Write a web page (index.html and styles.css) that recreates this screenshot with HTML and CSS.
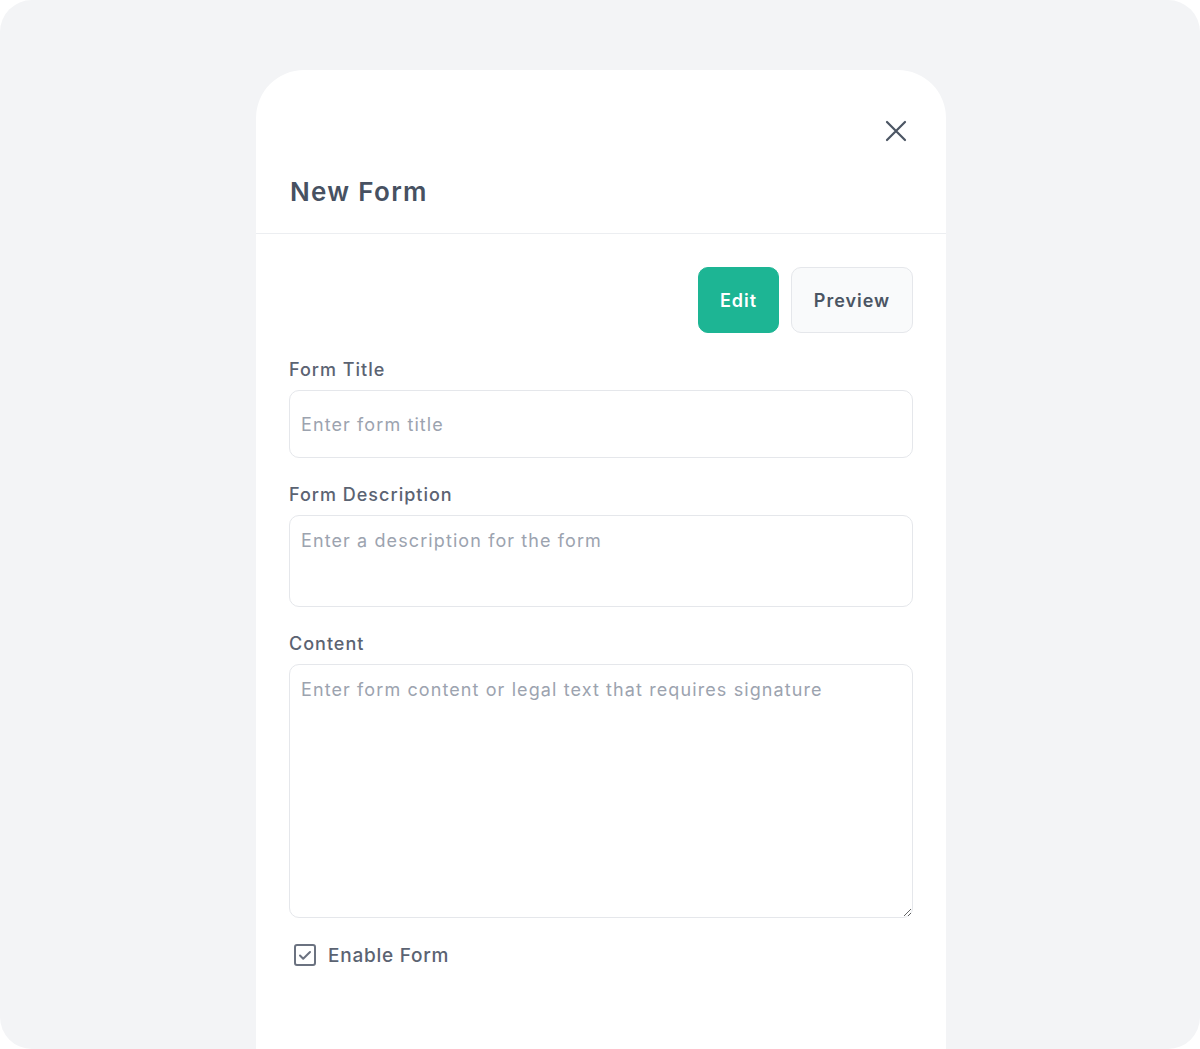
FILE: index.html
```html
<!DOCTYPE html>
<html lang="en">
<head>
<meta charset="utf-8">
<title>New Form</title>
<link rel="stylesheet" href="styles.css">
</head>
<body>
<div class="screen">
  <div class="modal">
    <div class="modal-header">
      <div class="close-row">
        <button class="close-btn" aria-label="Close">
          <svg width="24" height="24" viewBox="0 0 24 24" fill="none" stroke="currentColor" stroke-width="2.2" stroke-linecap="round"><path d="M3 3L21 21M21 3L3 21"/></svg>
        </button>
      </div>
      <h1 class="title">New Form</h1>
    </div>
    <div class="modal-body">
      <div class="tabs">
        <button class="btn btn-primary">Edit</button>
        <button class="btn btn-secondary">Preview</button>
      </div>
      <div class="field">
        <label class="label">Form Title</label>
        <input class="input" type="text" placeholder="Enter form title">
      </div>
      <div class="field">
        <label class="label">Form Description</label>
        <textarea class="textarea textarea-sm" placeholder="Enter a description for the form"></textarea>
      </div>
      <div class="field">
        <label class="label">Content</label>
        <textarea class="textarea textarea-lg" placeholder="Enter form content or legal text that requires signature"></textarea>
      </div>
      <label class="check">
        <span class="check-box">
          <svg width="24" height="24" viewBox="0 0 24 24" fill="none" stroke="currentColor" stroke-width="2" stroke-linecap="round" stroke-linejoin="round"><rect x="2" y="2" width="20" height="20" rx="2"/><path d="M7 12.5l3.2 3.2L17 9"/></svg>
        </span>
        <span class="check-text">Enable Form</span>
      </label>
    </div>
  </div>
</div>
</body>
</html>
```
FILE: styles.css
```css
* { box-sizing: border-box; }
html, body { margin: 0; padding: 0; background: #ffffff; }
body {
  font-family: "Inter", "Open Sans", sans-serif;
  color: #4b5563;
}
.screen {
  width: 1200px;
  height: 1049px;
  background: #f3f4f6;
  border-radius: 32px;
  overflow: hidden;
  display: flex;
  justify-content: flex-start;
  padding: 70px 0 0 256px;
}
.modal {
  width: 690px;
  background: #ffffff;
  border-radius: 48px 48px 0 0;
  align-self: stretch;
}
.modal-header {
  padding: 49px 33px 25px 33px;
  border-bottom: 1px solid #eceef1;
}
.close-row {
  display: flex;
  justify-content: flex-end;
  height: 24px;
}
.close-btn {
  border: 0;
  background: none;
  padding: 0;
  margin-right: 5px;
  color: #4b5563;
  width: 24px;
  height: 24px;
  display: flex;
}
.title {
  margin: 33px 0 0 1px;
  font-size: 26px;
  line-height: 32px;
  font-weight: 600;
  letter-spacing: 1.3px;
  color: #475161;
}
.modal-body {
  padding: 33px 33px 0 33px;
}
.tabs {
  display: flex;
  justify-content: flex-end;
  gap: 12px;
}
.btn {
  height: 66px;
  border-radius: 10px;
  font-family: inherit;
  font-size: 18px;
  font-weight: 600;
  letter-spacing: 1px;
  padding: 0;
}
.btn-primary {
  background: #1db594;
  color: #ffffff;
  border: 1px solid #1db594;
  width: 81px;
}
.btn-secondary {
  background: #f9fafb;
  color: #4b5563;
  border: 1px solid #e5e7eb;
  width: 122px;
}
.field {
  margin-top: 23px;
  display: flex;
  flex-direction: column;
}
.label {
  font-size: 18px;
  line-height: 27px;
  font-weight: 500;
  letter-spacing: 1px;
  color: #5b6372;
  margin-bottom: 7px;
}
.input, .textarea {
  width: 100%;
  border: 1px solid #e5e7eb;
  border-radius: 10px;
  font-family: inherit;
  font-size: 18px;
  letter-spacing: 1.1px;
  color: #374151;
  background: #ffffff;
  padding: 0 11px;
}
.input { height: 68px; }
.textarea {
  padding-top: 11px;
  line-height: 27px;
  resize: vertical;
  display: block;
}
.textarea-sm { height: 92px; resize: none; }
.textarea-lg { height: 254px; }
.input::placeholder, .textarea::placeholder { color: #9ca3af; }
.check {
  display: flex;
  align-items: center;
  gap: 11px;
  margin-top: 25px;
  padding-left: 4px;
}
.check-box { display: flex; color: #6b7280; }
.check-text {
  font-size: 19px;
  font-weight: 500;
  letter-spacing: 0.75px;
  color: #5b6372;
}
```
